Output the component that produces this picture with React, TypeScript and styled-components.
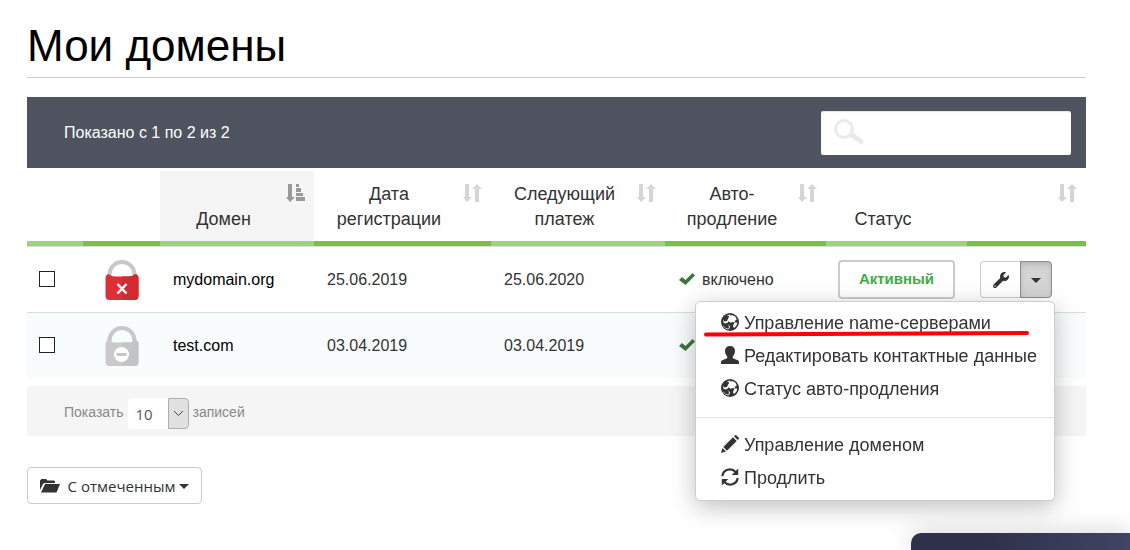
import React from "react";
import styled, { createGlobalStyle, css } from "styled-components";
import { FaWrench } from "react-icons/fa";

const GlobalStyle = createGlobalStyle`
  * { box-sizing: border-box; }
  body {
    margin: 0;
    background: #fff;
    color: #333;
    font-family: "Liberation Sans", Arial, sans-serif;
    font-size: 16px;
  }
  button, input, select { font: inherit; color: inherit; }
`;

const Page = styled.main`
  min-height: 100vh;
  padding: 16px 44px 0 27px;
`;

const Title = styled.h1`
  margin: 0 0 19px;
  padding-bottom: 1px;
  border-bottom: 1px solid #ccc;
  color: #000;
  font-size: 44px;
  font-weight: 400;
  line-height: 60px;
`;

const Toolbar = styled.div`
  display: flex;
  align-items: center;
  justify-content: space-between;
  height: 71px;
  margin-bottom: 3px;
  padding: 1px 15px 0 37px;
  background: #4f5360;
  color: #fff;
`;

const SearchBox = styled.label`
  display: flex;
  align-items: center;
  width: 250px;
  height: 44px;
  padding: 0 12px;
  border-radius: 2px;
  background: #fff;
  box-shadow: inset 0 1px 1px rgba(0, 0, 0, 0.1);
`;

const SearchInput = styled.input`
  flex: 1;
  min-width: 0;
  padding: 0 6px;
  border: 0;
  outline: 0;
  background: transparent;
  color: #333;
`;

const Table = styled.table`
  width: 100%;
  table-layout: fixed;
  border-collapse: separate;
  border-spacing: 0;
`;

const HeadCell = styled.th<{ $sorted?: boolean }>`
  padding: 0;
  border-bottom: 5px solid #9fd379;
  background: ${(p) => (p.$sorted ? "#f5f5f5" : "transparent")};
  font-weight: 400;
  &:nth-child(even) { border-bottom-color: #78c143; }
`;

const SortButton = styled.button`
  display: flex;
  width: 100%;
  height: 70px;
  padding: 12px 9px 9px 10px;
  border: 0;
  background: none;
  font-size: 18px;
  line-height: 25px;
  cursor: pointer;
`;

const SortLabel = styled.span`
  flex: 1;
  align-self: flex-end;
  text-align: center;
`;

const SortSlot = styled.span`
  display: flex;
  flex: 0 0 28px;
  justify-content: flex-end;
`;

const Row = styled.tr<{ $striped?: boolean }>`
  background: ${(p) => (p.$striped ? "#f8fcfd" : "#fff")};
`;

const Cell = styled.td<{ $align?: string }>`
  height: 66px;
  padding: 0 12px 0 13px;
  border-top: 1px solid #d9dedd;
  text-align: ${(p) => p.$align || "left"};
  white-space: nowrap;
  &:first-child { padding: 0 12px 1px; }
`;

const CheckBox = styled.input`
  appearance: none;
  display: block;
  width: 16px;
  height: 16px;
  margin: 0;
  border: 1px solid #222;
  background: #fff;
  &:checked { background: #333; }
`;

const LockImage = styled.svg`
  display: block;
  margin: 0 auto;
`;

const DomainLink = styled.a`
  color: #000;
  text-decoration: none;
`;

const Renewal = styled.span`
  display: flex;
  align-items: center;
  gap: 7px;
  padding-left: 1px;
`;

const StatusBadge = styled.button`
  display: block;
  width: 117px;
  height: 39px;
  margin-left: -1px;
  padding: 0 0 2px;
  border: 2px solid #ccc;
  border-radius: 4px;
  background: #fff;
  color: #3fad46;
  font-size: 15px;
  font-weight: 700;
`;

const buttonFace = css`
  display: flex;
  align-items: center;
  justify-content: center;
  height: 37px;
  border: 1px solid #ccc;
  cursor: pointer;
`;

const Actions = styled.div`
  position: relative;
  display: flex;
  width: 72px;
`;

const ActionButton = styled.button`
  ${buttonFace}
  flex: 1;
  border-right: 0;
  border-radius: 4px 0 0 4px;
  background: #fff;
`;

const ToggleButton = styled.button`
  ${buttonFace}
  width: 32px;
  padding: 2px 0 0;
  border-color: #8c8c8c;
  border-radius: 0 4px 4px 0;
  background: #d4d4d4;
  box-shadow: inset 0 3px 5px rgba(0, 0, 0, 0.125);
`;

const Caret = styled.span`
  border: 5px solid transparent;
  border-top-color: currentColor;
  border-bottom: 0;
`;

const Menu = styled.ul`
  position: absolute;
  z-index: 2;
  top: 40px;
  right: -3px;
  width: 360px;
  margin: 0;
  padding: 5px 0;
  border: 1px solid #ccc;
  border-radius: 5px;
  background: #fff;
  box-shadow: 0 6px 24px rgba(0, 0, 0, 0.25);
  list-style: none;
  text-align: left;
`;

const MenuItem = styled.li`
  position: relative;
`;

const MenuLink = styled.a`
  display: flex;
  align-items: center;
  gap: 5px;
  height: 33px;
  padding-left: 25px;
  color: #333;
  font-size: 18px;
  text-decoration: none;
  svg { margin-bottom: 4px; }
`;

const Divider = styled.li`
  height: 1px;
  margin: 11px 0;
  background: #e2e2e2;
`;

const Underline = styled.svg`
  position: absolute;
  left: 8px;
  top: 22px;
  pointer-events: none;
`;

const Footer = styled.div`
  display: flex;
  align-items: center;
  gap: 4px;
  height: 50px;
  margin: 8px 0 31px;
  padding: 2px 37px 0 37px;
  background: #f5f5f5;
  color: #888;
  font-size: 14px;
`;

const SelectBox = styled.span`
  position: relative;
  display: flex;
  width: 61px;
  height: 31px;
  margin-top: 2px;
`;

const Select = styled.select`
  appearance: none;
  width: 100%;
  padding: 2px 8px 0;
  border: 0;
  border-radius: 4px;
  background: #fff;
  color: #555;
  font-family: "Open Sans", sans-serif;
  font-size: 15px;
`;

const SelectArrow = styled.span`
  position: absolute;
  top: 0;
  right: 0;
  display: flex;
  align-items: center;
  justify-content: center;
  width: 21px;
  height: 31px;
  border: 1px solid #adadad;
  border-radius: 0 4px 4px 0;
  background: #e1e1e1;
  pointer-events: none;
`;

const BulkButton = styled.button`
  ${buttonFace}
  width: 175px;
  padding: 0;
  border-radius: 4px;
  background: #fff;
  font-family: "Open Sans", sans-serif;
  font-size: 15px;
  svg { margin-right: 8px; }
  ${Caret} { margin: 2px 0 0 4px; }
`;

const ChatPanel = styled.aside`
  position: fixed;
  right: 0;
  bottom: 0;
  width: 219px;
  height: 17px;
  border-radius: 10px 0 0 0;
  background: linear-gradient(100deg, #2f304b 30%, #3f4563);
  box-shadow: 0 0 24px rgba(0, 0, 0, 0.2);
`;

const SortIcon = () => (
  <svg width="19" height="20" viewBox="0 0 19 20" fill="#d5d5d5" aria-hidden="true">
    <path d="M2 1h4v13h3l-5 5-4-5h2zM12 19h4V6h3l-5-5-5 5h3z" />
  </svg>
);

const SortedIcon = () => (
  <svg width="19" height="20" viewBox="0 0 19 20" fill="#999" aria-hidden="true">
    <path d="M2 1h4v13h3l-5 5-4-5h2zM10 1h3v3h-3zM10 5h5v4h-5zM10 10h7v3h-7zM10 14h9v4h-9z" />
  </svg>
);

const SearchIcon = () => (
  <svg width="32" height="28" viewBox="0 0 32 28" fill="none" stroke="#e9eaec" aria-hidden="true">
    <circle cx="11" cy="10" r="8.500" strokeWidth="3" />
    <path d="M18 15.500L28 22.500" strokeWidth="5" strokeLinecap="round" />
  </svg>
);

const Lock = ({ active }: { active?: boolean }) => (
  <LockImage width="34" height="40" viewBox="0 0 34 40" aria-hidden="true">
    <path d="M4.500 17v-2.500a12.500 12.500 0 0 1 25 0V17" fill="none" stroke="#c8c8c8" strokeWidth="4" />
    <path
      d="M3.500 14Q7 16.500 10 16.500h14q3 0 6.500-2.500 3 1 3 4v18q0 4-4 4h-25q-4 0-4-4V18q0-3 3-4z"
      fill={active ? "#de2f36" : "#cacaca"}
    />
    <path d="M17 16.500h7q3 0 6.500-2.500 3 1 3 4v18q0 4-4 4H17z" fill={active ? "#d12b32" : "#c4c4c4"} />
    {active ? (
      <path d="M12.500 24l9 9.500M21.500 24l-9 9.500" stroke="#fff" strokeWidth="2.500" />
    ) : (
      <>
        <circle cx="16.500" cy="28.500" r="7.500" fill="#fff" />
        <path d="M11.500 28.500h10" stroke="#c6c6c6" strokeWidth="3" />
      </>
    )}
  </LockImage>
);

const CheckIcon = () => (
  <svg width="16" height="14" viewBox="0 0 16 14" fill="#3c763d" role="img" aria-label="Автопродление">
    <path d="M0 7L3 4l3.500 3L13.500 0 16 2.500 6.500 12z" />
  </svg>
);

const GlobeIcon = () => (
  <svg width="18" height="18" viewBox="0 0 18 18" aria-hidden="true">
    <circle cx="9" cy="9" r="9" fill="#333" />
    <path
      fill="#fff"
      d="M6.500 2.200L9 1.600l.8 1.200 1.400-.9 3 1.700 1.600 2.600-1.500 1.300-.8 2-2-.6-1.800.8-2.300-1.500-.8 1.500-1.600.3.500 1.500 2.200.2 1.300 1.500-.6 2.300-1.100 1-2.500-.7L2 13l1.800-1.600-1.300-2L2 7l2.300-1.500z"
    />
    <path fill="#333" d="M4.500 3.500l2.700-1 1 1.300-1 1.500L6 8 3.500 8.500 2 7zM3 10l3 .8 2 2-.5 3L4.500 15 2 12z" />
    <path fill="#fff" d="M13.500 9.500l2.700 0-.7 3-2.300 2.400-1.300-1.700z" />
  </svg>
);

const UserIcon = () => (
  <svg width="18" height="18" viewBox="0 0 18 18" fill="#333" aria-hidden="true">
    <path d="M9 0c3.200 0 5 2 5 5 0 2-.7 3.700-1.900 5-.7.900-.6 1.900.4 2.400l4.300 1.900q1.200.6 1.200 1.900V18H0v-1.800q0-1.300 1.200-1.900l4.300-1.900c1-.5 1.100-1.500.4-2.400C4.700 8.700 4 7 4 5c0-3 1.800-5 5-5z" />
  </svg>
);

const PencilIcon = () => (
  <svg width="18" height="18" viewBox="0 0 18 18" fill="#333" aria-hidden="true">
    <path d="M0 18l1.500-5 3.500 3.500zM2.300 12L12 2.300 15.700 6 6 15.700zM13 1.300l.8-.8q.8-.8 1.700 0l2 2q.8.900 0 1.700l-.8.800z" />
  </svg>
);

const RefreshIcon = () => (
  <svg width="18" height="18" viewBox="0 0 18 18" fill="none" stroke="#333" strokeWidth="2.200" aria-hidden="true">
    <path d="M1.300 8A7.600 7.600 0 0 1 14.500 4M16.700 10A7.600 7.600 0 0 1 3.500 14" />
    <path d="M17.200 0.500v6.500h-6.500zM0.800 17.500v-6.500h6.500z" fill="#333" stroke="none" />
  </svg>
);

const FolderIcon = () => (
  <svg width="20" height="15" viewBox="0 0 20 15" fill="#333" aria-hidden="true">
    <path d="M0 12V2.500L1.500 1H6l1.500 1.500H14l1 1V5H4.500L3 6zM5 6h15l-3.500 8.500H1z" />
  </svg>
);

const columns = [56, 77, 154, 177, 174, 161, 141, 119];

const domains = [
  { name: "mydomain.org", registered: "25.06.2019", next: "25.06.2020", renewal: "включено", active: true },
  { name: "test.com", registered: "03.04.2019", next: "03.04.2019", renewal: "", active: false },
];

const SortHead = ({ children, label, icon = true, sorted = false }: {
  children?: React.ReactNode; label?: string; icon?: boolean; sorted?: boolean;
}) => (
  <HeadCell scope="col" $sorted={sorted} aria-sort={sorted ? "ascending" : undefined}>
    <SortButton type="button" aria-label={label}>
      <SortLabel>{children}</SortLabel>
      <SortSlot>{icon && (sorted ? <SortedIcon /> : <SortIcon />)}</SortSlot>
    </SortButton>
  </HeadCell>
);

const ActionsMenu = () => (
  <Menu>
    <MenuItem>
      <MenuLink href="#ns"><GlobeIcon />Управление name-серверами</MenuLink>
      <Underline width="326" height="8" viewBox="0 0 326 8" aria-hidden="true">
        <path d="M2 5.500L323 4" stroke="#fe0000" strokeWidth="4" strokeLinecap="round" />
      </Underline>
    </MenuItem>
    <MenuItem><MenuLink href="#contacts"><UserIcon />Редактировать контактные данные</MenuLink></MenuItem>
    <MenuItem><MenuLink href="#renewal"><GlobeIcon />Статус авто-продления</MenuLink></MenuItem>
    <Divider role="separator" />
    <MenuItem><MenuLink href="#manage"><PencilIcon />Управление доменом</MenuLink></MenuItem>
    <MenuItem><MenuLink href="#renew"><RefreshIcon />Продлить</MenuLink></MenuItem>
  </Menu>
);

export default function App() {
  return (
    <>
      <GlobalStyle />
      <Page>
        <Title>Мои домены</Title>
        <Toolbar>
          <span>Показано с 1 по 2 из 2</span>
          <SearchBox>
            <SearchIcon />
            <SearchInput type="text" aria-label="Поиск" />
          </SearchBox>
        </Toolbar>
        <Table>
          <colgroup>
            {columns.map((width, i) => <col key={i} width={width} />)}
          </colgroup>
          <thead>
            <tr>
              <HeadCell />
              <HeadCell />
              <SortHead sorted>Домен</SortHead>
              <SortHead>Дата<br />регистрации</SortHead>
              <SortHead>Следующий<br />платеж</SortHead>
              <SortHead>Авто-<br />продление</SortHead>
              <SortHead icon={false}>Статус</SortHead>
              <SortHead label="Действия" />
            </tr>
          </thead>
          <tbody>
            {domains.map((d) => (
              <Row key={d.name} $striped={!d.active}>
                <Cell><CheckBox type="checkbox" aria-label={d.name} /></Cell>
                <Cell $align="center"><Lock active={d.active} /></Cell>
                <Cell><DomainLink href="#domain">{d.name}</DomainLink></Cell>
                <Cell>{d.registered}</Cell>
                <Cell>{d.next}</Cell>
                <Cell><Renewal><CheckIcon />{d.renewal}</Renewal></Cell>
                <Cell>{d.active && <StatusBadge type="button">Активный</StatusBadge>}</Cell>
                <Cell>
                  {d.active && (
                    <Actions>
                      <ActionButton type="button" aria-label="Настройки"><FaWrench size={16} /></ActionButton>
                      <ToggleButton type="button" aria-label="Меню" aria-expanded="true"><Caret /></ToggleButton>
                      <ActionsMenu />
                    </Actions>
                  )}
                </Cell>
              </Row>
            ))}
          </tbody>
        </Table>
        <Footer>
          <label htmlFor="page-size">Показать</label>
          <SelectBox>
            <Select id="page-size" defaultValue="10">
              <option>10</option>
              <option>25</option>
              <option>50</option>
            </Select>
            <SelectArrow>
              <svg width="11" height="7" viewBox="0 0 11 7" fill="none" stroke="#444" aria-hidden="true">
                <path d="M1 1l4.500 4.500L10 1" />
              </svg>
            </SelectArrow>
          </SelectBox>
          <span>записей</span>
        </Footer>
        <BulkButton type="button"><FolderIcon />С отмеченным<Caret /></BulkButton>
      </Page>
      <ChatPanel />
    </>
  );
}
